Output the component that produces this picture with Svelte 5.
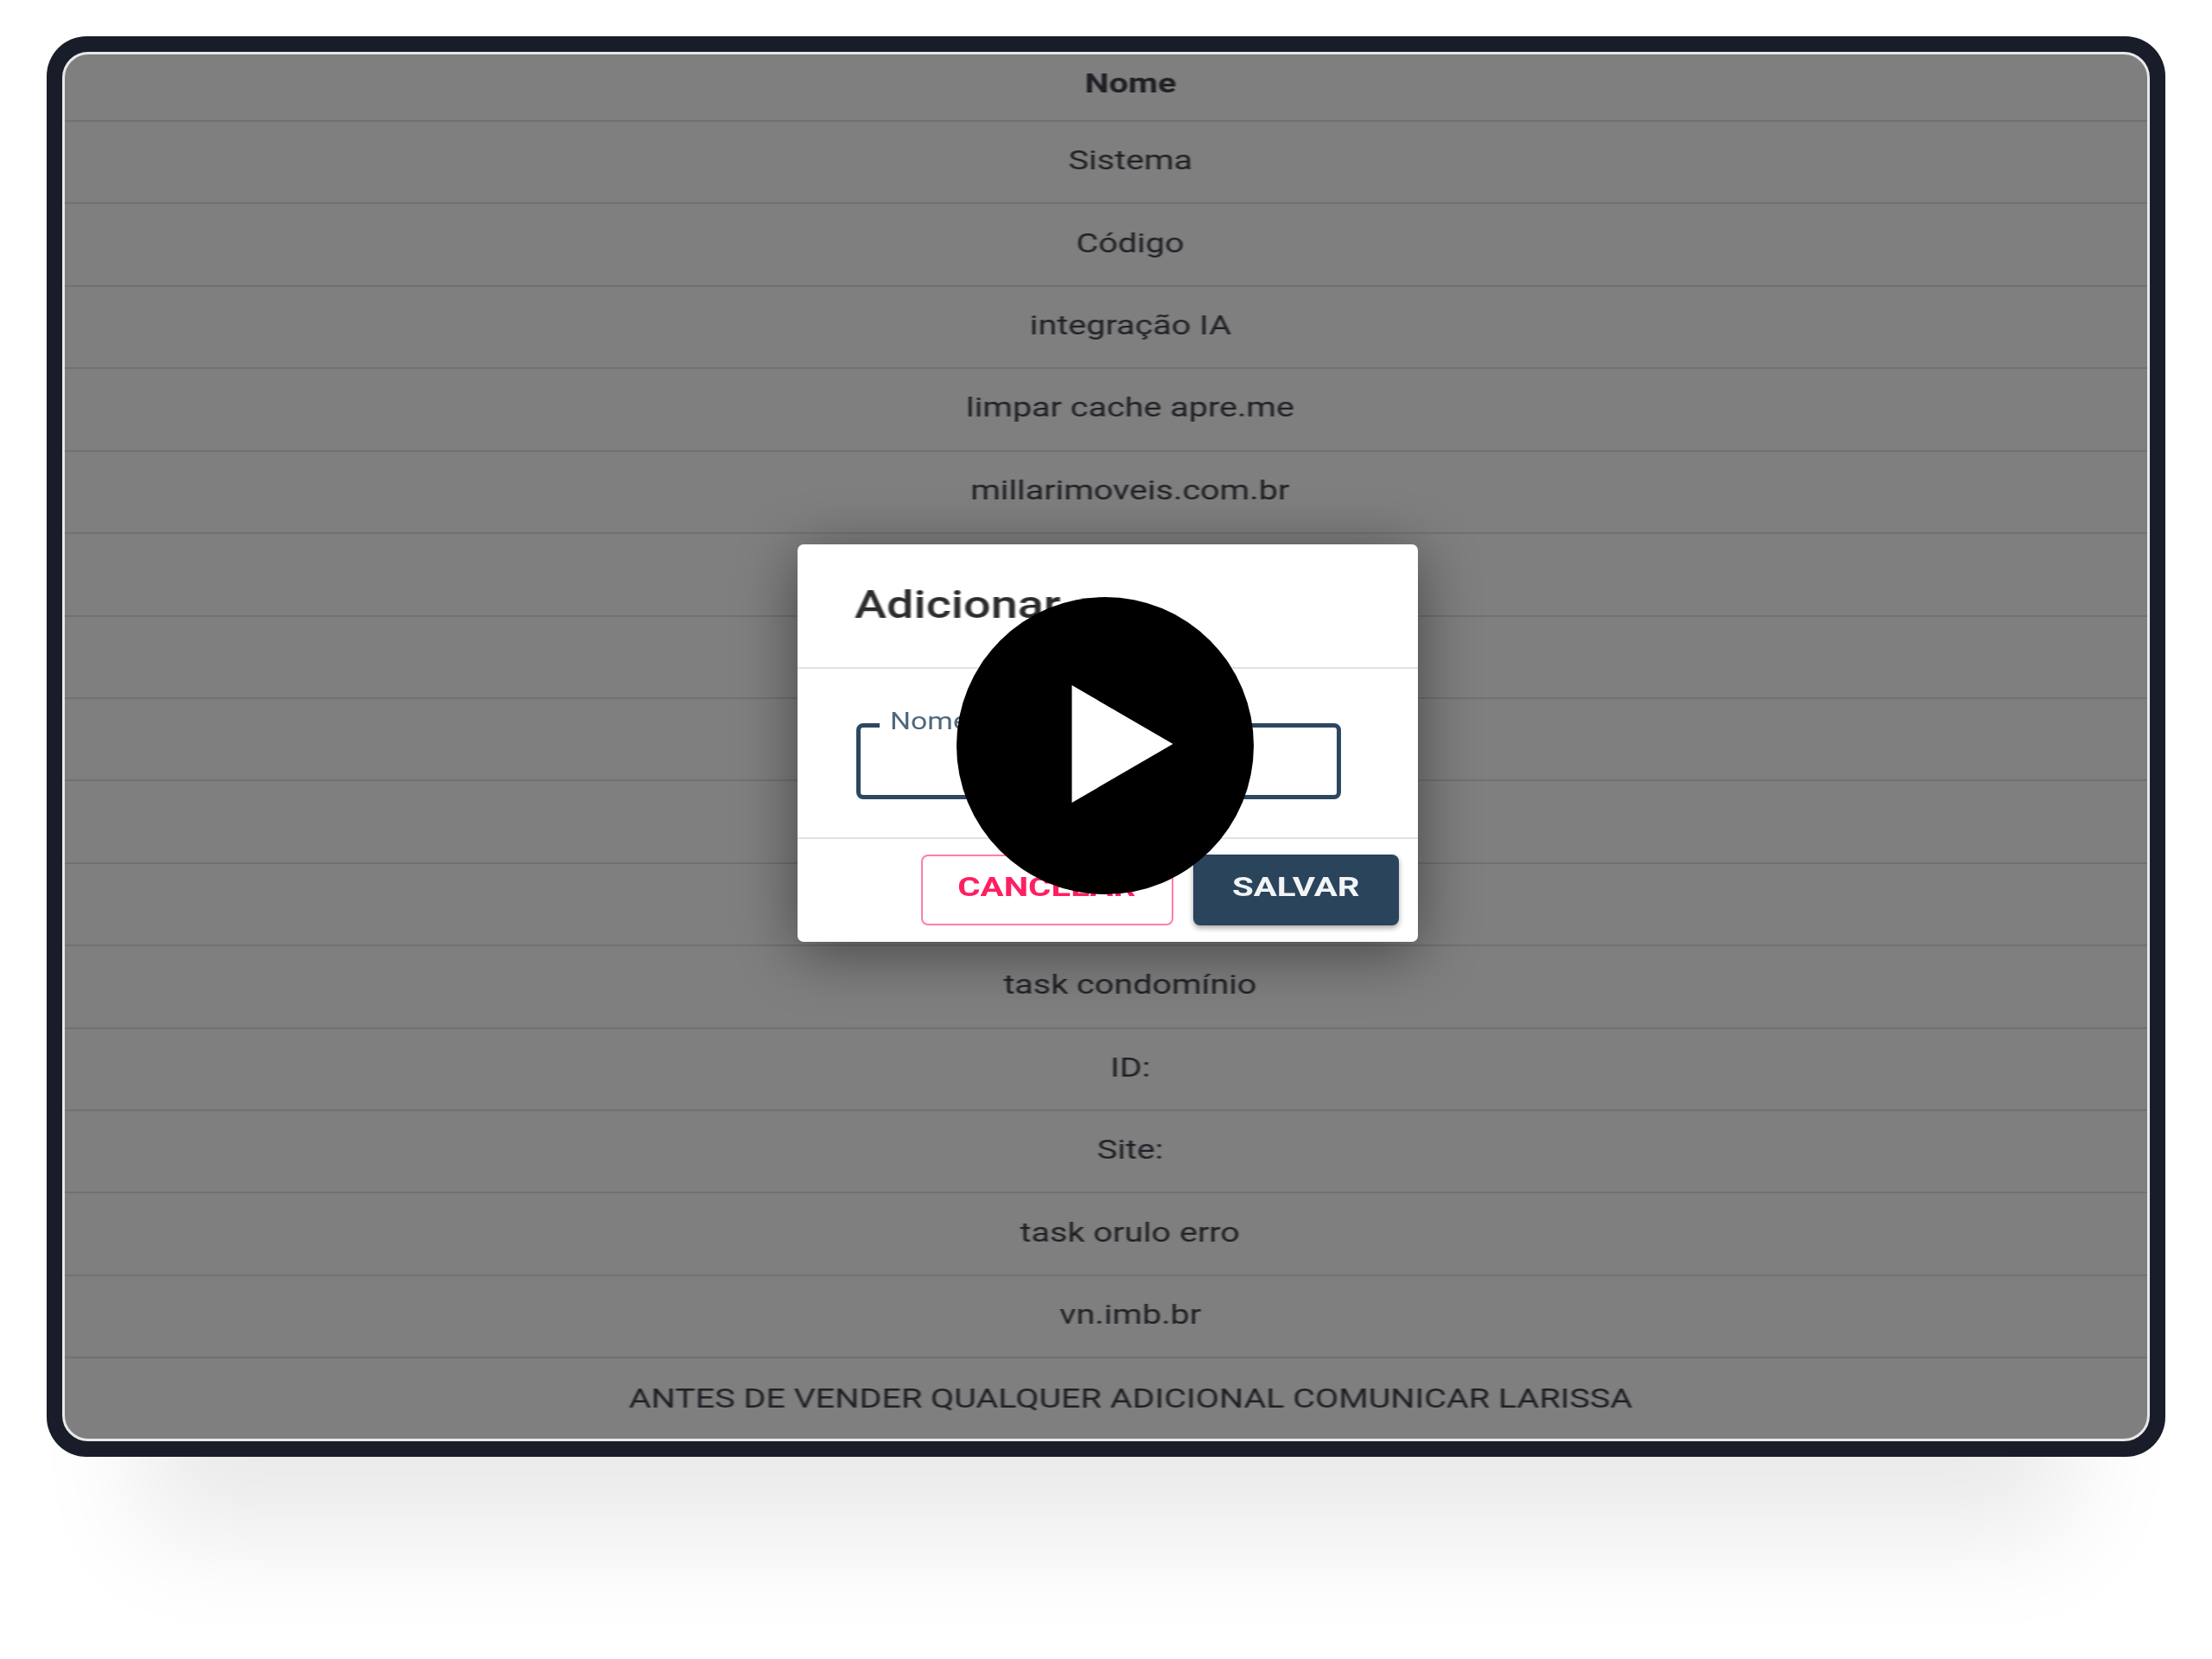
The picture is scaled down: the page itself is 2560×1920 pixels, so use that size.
<script>
  const rows = [
    'Sistema', 'Código', 'integração IA', 'limpar cache apre.me', 'millarimoveis.com.br',
    '', '', '', '', '',
    'task condomínio', 'ID:', 'Site:', 'task orulo erro', 'vn.imb.br',
    'ANTES DE VENDER QUALQUER ADICIONAL COMUNICAR LARISSA'
  ];
</script>

<div class="stage">
  <div class="frame">
    <div class="screen">
      <div class="table">
        <div class="row head"><span class="txt">Nome</span></div>
        {#each rows as r}
          <div class="row"><span class="txt">{r}</span></div>
        {/each}
      </div>
      <div class="overlay">
        <div class="dialog">
          <header class="dlg-head"><h2>Adicionar</h2></header>
          <div class="dlg-body">
            <div class="field">
              <span class="label"><span class="label-text">Nome</span></span>
            </div>
          </div>
          <footer class="dlg-foot">
            <button class="btn cancel"><span class="btn-text">CANCELAR</span></button>
            <button class="btn save"><span class="btn-text">SALVAR</span></button>
          </footer>
        </div>
      </div>
    </div>
  </div>
  <svg class="play" viewBox="0 0 344 344" aria-label="Reproduzir">
    <circle cx="172" cy="172" r="172" fill="#000" />
    <polygon points="133.5,102 133.5,238 250.5,170" fill="#fff" />
  </svg>
</div>

<style>
  :global(body) { margin: 0; background: #fff; }
  .stage {
    position: relative;
    width: 2560px;
    height: 1920px;
    overflow: hidden;
    padding: 42px 54px 0;
    box-sizing: border-box;
    background: #fff;
    font-family: Roboto, "Liberation Sans", sans-serif;
  }
  .frame {
    width: 2452px;
    height: 1644px;
    box-sizing: border-box;
    padding: 18px;
    background: #181d29;
    border-radius: 46px;
    box-shadow: 0 200px 120px -110px rgba(0, 0, 0, 0.085);
  }
  .screen {
    position: relative;
    height: 100%;
    box-sizing: border-box;
    border: 3px solid #e8e8e8;
    border-radius: 30px;
    overflow: hidden;
    background: #7f7f7f;
  }
  .table { display: flex; flex-direction: column; }
  .row {
    height: 95.43px;
    box-sizing: border-box;
    padding: 0 0 4px 56px;
    display: flex;
    align-items: center;
    justify-content: center;
    border-bottom: 2px solid #717171;
    color: #1f1f25;
    font-size: 31px;
    flex: none;
  }
  .row:last-child { border-bottom: 0; }
  .row.head { height: 78px; font-weight: 700; padding-bottom: 9px; }
  .txt {
    display: inline-block;
    transform: scaleX(1.275);
    white-space: nowrap;
    filter: blur(0.7px);
  }
  .overlay {
    position: absolute;
    inset: 0;
    display: flex;
    align-items: center;
    justify-content: center;
    padding: 0 0 8px 3px;
  }
  .dialog {
    width: 718px;
    height: 460px;
    background: #fff;
    border-radius: 7px;
    box-shadow: 0 12px 70px rgba(0, 0, 0, 0.45);
    display: flex;
    flex-direction: column;
  }
  .dlg-head {
    height: 144px;
    flex: none;
    box-sizing: border-box;
    padding: 41px 0 0 66px;
    border-bottom: 2px solid #e2e2e2;
  }
  h2 {
    margin: 0;
    font-size: 45px;
    font-weight: 500;
    line-height: 58px;
    color: #2c2c2c;
    transform: scaleX(1.24);
    transform-origin: left center;
    filter: blur(0.7px);
  }
  .dlg-body {
    height: 197px;
    flex: none;
    box-sizing: border-box;
    padding: 63px 89px 0 68px;
    border-bottom: 2px solid #e2e2e2;
  }
  .field {
    position: relative;
    height: 88px;
    box-sizing: border-box;
    border: 5px solid #2c4760;
    border-radius: 8px;
    filter: blur(0.5px);
  }
  .label {
    position: absolute;
    left: 22px;
    top: -24px;
    width: 130px;
    padding: 0 0 0 12px;
    background: #fff;
    color: #4f687c;
    font-size: 27px;
    line-height: 34px;
  }
  .label-text {
    display: inline-block;
    transform: scaleX(1.25);
    transform-origin: left center;
  }
  .dlg-foot {
    flex: 1;
    display: flex;
    justify-content: flex-end;
    gap: 23px;
    padding: 18px 22px 0 0;
  }
  .btn {
    height: 82px;
    box-sizing: border-box;
    border-radius: 8px;
    font-family: inherit;
    font-size: 31px;
    font-weight: 700;
    padding: 0 0 8px;
  }
  .btn-text {
    display: inline-block;
    transform: scaleX(1.3);
    filter: blur(0.5px);
  }
  .cancel {
    width: 292px;
    background: #fff;
    border: 2px solid #ff7fa4;
    color: #ff1f60;
  }
  .save {
    width: 238px;
    background: #2a445c;
    border: 0;
    color: #f2f4f6;
    box-shadow: 0 3px 6px rgba(0, 0, 0, 0.35);
  }
  .play {
    position: absolute;
    left: 1106.5px;
    top: 691px;
    width: 344px;
    height: 344px;
  }
</style>
